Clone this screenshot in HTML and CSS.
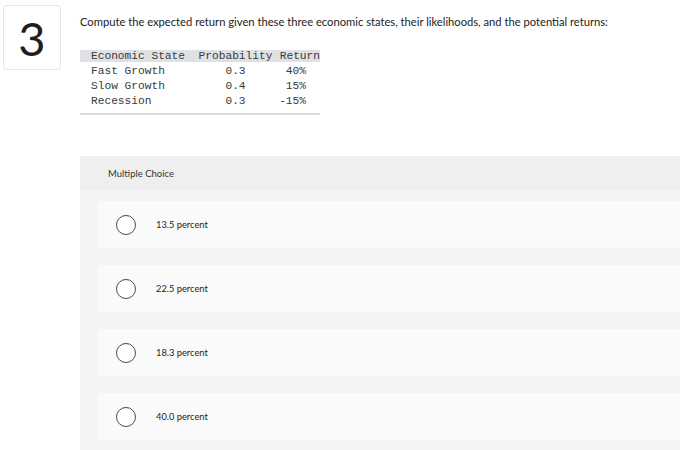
FILE: index.html
```html
<!DOCTYPE html>
<html>
<head>
<meta charset="utf-8">
<link rel="stylesheet" href="styles.css">
</head>
<body>
<div class="question">
  <div class="qnum">3</div>
  <div class="qbody">
    <p class="prompt">Compute the expected return given these three economic states, their likelihoods, and the potential returns:</p>
    <div class="data">
      <table>
        <thead>
          <tr><th class="c1">Economic State</th><th class="c2">Probability</th><th class="c3">Return</th></tr>
        </thead>
        <tbody>
          <tr><td class="c1">Fast Growth</td><td class="c2">0.3</td><td class="c3">40%</td></tr>
          <tr><td class="c1">Slow Growth</td><td class="c2">0.4</td><td class="c3">15%</td></tr>
          <tr><td class="c1">Recession</td><td class="c2">0.3</td><td class="c3">-15%</td></tr>
        </tbody>
      </table>
    </div>
    <div class="mc">
      <div class="mc-head">Multiple Choice</div>
      <div class="mc-list">
        <div class="opt"><span class="radio"></span><span class="label">13.5 percent</span></div>
        <div class="opt"><span class="radio"></span><span class="label">22.5 percent</span></div>
        <div class="opt"><span class="radio"></span><span class="label">18.3 percent</span></div>
        <div class="opt"><span class="radio"></span><span class="label">40.0 percent</span></div>
      </div>
    </div>
  </div>
</div>
</body>
</html>
```
FILE: styles.css
```css
html, body {
  margin: 0;
  padding: 0;
  background: #ffffff;
  overflow: hidden;
}
body {
  font-family: Lato, "Open Sans", sans-serif;
  color: #222;
}
.question {
  display: flex;
  align-items: flex-start;
  padding: 5px 0 0 3px;
}
.qnum {
  width: 58px;
  height: 65px;
  box-sizing: border-box;
  border: 1px solid #e6e6e6;
  border-radius: 4px;
  display: flex;
  align-items: center;
  justify-content: center;
  font-family: Lato, sans-serif;
  font-weight: 400;
  font-size: 47px;
  color: #1e1e1e;
  flex: none;
}
.qbody {
  margin-left: 19px;
  flex: 1;
}
.prompt {
  margin: 11px 0 0 0;
  font-size: 11.2px;
  line-height: 12px;
  color: #222;
  white-space: nowrap;
}
.data {
  margin-top: 22px;
  width: 240px;
  border-bottom: 2px solid #dcdcdc;
  padding-bottom: 4px;
}
table {
  border-collapse: collapse;
  table-layout: fixed;
  width: 240px;
  font-family: "Liberation Mono", monospace;
  font-size: 11.2px;
  color: #3a3a3a;
}
th {
  font-weight: normal;
  background: #e0e1e5;
  height: 12px;
  line-height: 12px;
  padding: 0;
}
td {
  height: 15px;
  line-height: 15px;
  padding: 0;
}
tbody tr:first-child td {
  padding-top: 2px;
}
.c1 { text-align: left; padding-left: 11px; width: 104px; }
.c2 { text-align: center; width: 81px; }
.c3 { text-align: right; padding-right: 14px; width: 30px; }
th.c3 { padding-right: 0; width: 44px; }
.mc {
  margin-top: 41px;
  background: #f4f4f4;
  padding-bottom: 12px;
}
.mc-head {
  background: #efefef;
  height: 34px;
  display: flex;
  align-items: center;
  padding-left: 28px;
  font-size: 9.5px;
  color: #333;
}
.mc-list {
  display: flex;
  flex-direction: column;
  gap: 17px;
  padding: 11px 0 0 18px;
}
.opt {
  background: #fafafa;
  height: 47px;
  display: flex;
  align-items: center;
  padding-left: 18px;
}
.radio {
  width: 20px;
  height: 20px;
  box-sizing: border-box;
  border: 1.5px solid #3e4c5c;
  border-radius: 50%;
  background: #fff;
  flex: none;
}
.label {
  margin-left: 20px;
  font-size: 9.3px;
  color: #222;
}
```
